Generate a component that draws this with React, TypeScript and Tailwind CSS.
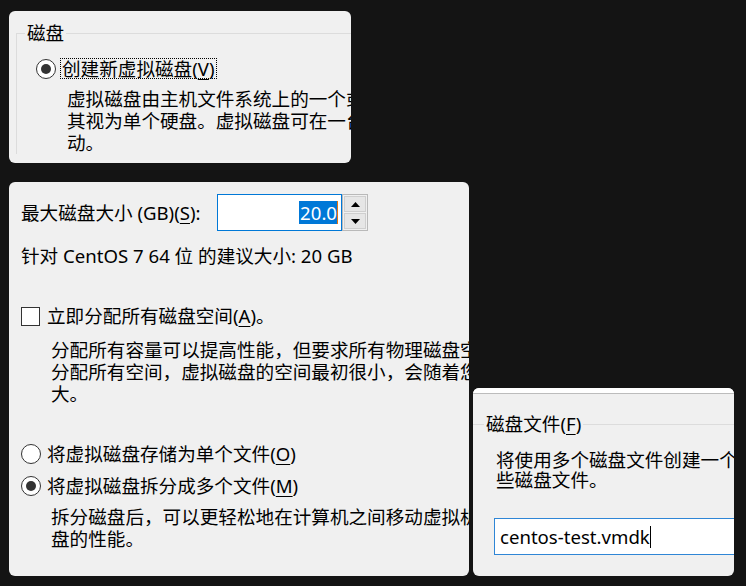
import React from "react";

const font = { fontFamily: '"Noto Sans", "Noto Sans CJK SC", sans-serif' };

function Radio({ checked }: { checked?: boolean }) {
  return (
    <span className="w-[20px] h-[20px] rounded-full border-[1.5px] border-[#333333] bg-white flex items-center justify-center shrink-0">
      {checked && <span className="w-[10px] h-[10px] rounded-full bg-[#333333]" />}
    </span>
  );
}

function Check() {
  return <span className="w-[19px] h-[19px] border border-[#333333] bg-white shrink-0" />;
}

function U({ children }: { children: React.ReactNode }) {
  return <span className="underline underline-offset-[3px] decoration-[1px]">{children}</span>;
}

export default function App() {
  return (
    <div
      className="w-[746px] h-[586px] bg-[#141414] flex items-end pl-[9px] pt-[11px] pb-[10px] text-[18.6px] leading-[22px] text-black overflow-hidden"
      style={font}
    >
      {/* left column */}
      <div className="flex flex-col gap-[19px] self-start">
        {/* panel 1 */}
        <div className="w-[342px] h-[152px] rounded-[6px] bg-[#f0f0f0] overflow-hidden shrink-0">
          <fieldset className="ml-[7px] mt-[11px] w-[420px] border-l border-t border-[#dcdcdc]">
            <legend className="ml-[8px] px-[2px] leading-[22px]">磁盘</legend>
            <div className="mt-[14px] ml-[19px] flex items-center gap-[4px]">
              <Radio checked />
              <span className="border border-dotted border-black px-[1px] leading-[19px] whitespace-nowrap">
                创建新虚拟磁盘(<U>V</U>)
              </span>
            </div>
            <div className="mt-[9px] ml-[50px] whitespace-nowrap">
              虚拟磁盘由主机文件系统上的一个或多个文件组成，客户机操作系统会将
              <br />
              其视为单个硬盘。虚拟磁盘可在一台主机上或多台主机之间轻松复制或移
              <br />
              动。
            </div>
          </fieldset>
        </div>

        {/* panel 2 */}
        <div className="w-[460px] h-[394px] rounded-[6px] bg-[#f0f0f0] overflow-hidden shrink-0 pl-[12px]">
          <div className="mt-[12px] flex items-center">
            <span className="w-[196px] whitespace-nowrap">
              最大磁盘大小 (GB)(<U>S</U>):
            </span>
            <div className="w-[125px] h-[37px] border border-[#0078d7] bg-white flex items-center justify-end pr-[3px]">
              <span className="bg-[#0078d7] text-white leading-[23px] pl-[1px]">20.0</span>
              <span className="w-[1px] h-[23px] bg-[#e8740c]" />
            </div>
            <div className="w-[26px] h-[37px] border border-[#b9b9b9] bg-[#f0f0f0] flex flex-col p-[1px] gap-[1px]">
              <div className="flex-1 bg-[#e6e6e6] border border-[#cfcfcf] flex items-center justify-center">
                <svg width="9" height="5" viewBox="0 0 9 5">
                  <path d="M0 5 L4.5 0 L9 5 Z" fill="#000" />
                </svg>
              </div>
              <div className="flex-1 bg-[#e6e6e6] border border-[#cfcfcf] flex items-center justify-center">
                <svg width="9" height="5" viewBox="0 0 9 5">
                  <path d="M0 0 L4.5 5 L9 0 Z" fill="#000" />
                </svg>
              </div>
            </div>
          </div>
          <div className="mt-[14px] whitespace-nowrap">针对 CentOS 7 64 位 的建议大小: 20 GB</div>

          <div className="mt-[38px] flex items-center gap-[7px] h-[22px]">
            <Check />
            <span className="whitespace-nowrap">
              立即分配所有磁盘空间(<U>A</U>)。
            </span>
          </div>
          <div className="mt-[12px] ml-[30px] whitespace-nowrap">
            分配所有容量可以提高性能，但要求所有物理磁盘空间立即可用。如果不立即
            <br />
            分配所有空间，虚拟磁盘的空间最初很小，会随着您向其中添加数据而不断变
            <br />
            大。
          </div>

          <div className="mt-[38px] flex items-center gap-[6px] h-[22px]">
            <Radio />
            <span className="whitespace-nowrap">
              将虚拟磁盘存储为单个文件(<U>O</U>)
            </span>
          </div>
          <div className="mt-[10px] flex items-center gap-[6px] h-[22px]">
            <Radio checked />
            <span className="whitespace-nowrap">
              将虚拟磁盘拆分成多个文件(<U>M</U>)
            </span>
          </div>
          <div className="mt-[9px] ml-[30px] whitespace-nowrap">
            拆分磁盘后，可以更轻松地在计算机之间移动虚拟机，但可能会降低大容量磁
            <br />
            盘的性能。
          </div>
        </div>
      </div>

      {/* panel 3 */}
      <div className="ml-[4px] w-[261px] h-[188px] rounded-[6px] bg-[#f0f0f0] overflow-hidden shrink-0">
        <div className="h-[5px] bg-white" />
        <div className="h-[1px] bg-[#bcbcbc]" />
        <fieldset className="mt-[19px] w-[400px] border-t border-[#dcdcdc]">
          <legend className="ml-[11px] px-[2px] leading-[22px] whitespace-nowrap">
            磁盘文件(<U>F</U>)
          </legend>
          <div className="mt-[15px] ml-[23px] leading-[20px] whitespace-nowrap">
            将使用多个磁盘文件创建一个新虚拟磁盘，请为这
            <br />
            些磁盘文件。
          </div>
          <div className="mt-[28px] ml-[21px] w-[360px] h-[37px] border border-[#2f86d6] bg-white flex items-center pl-[5px]">
            <span className="whitespace-nowrap">centos-test.vmdk</span>
            <span className="w-[1px] h-[22px] bg-black" />
          </div>
        </fieldset>
      </div>
    </div>
  );
}
